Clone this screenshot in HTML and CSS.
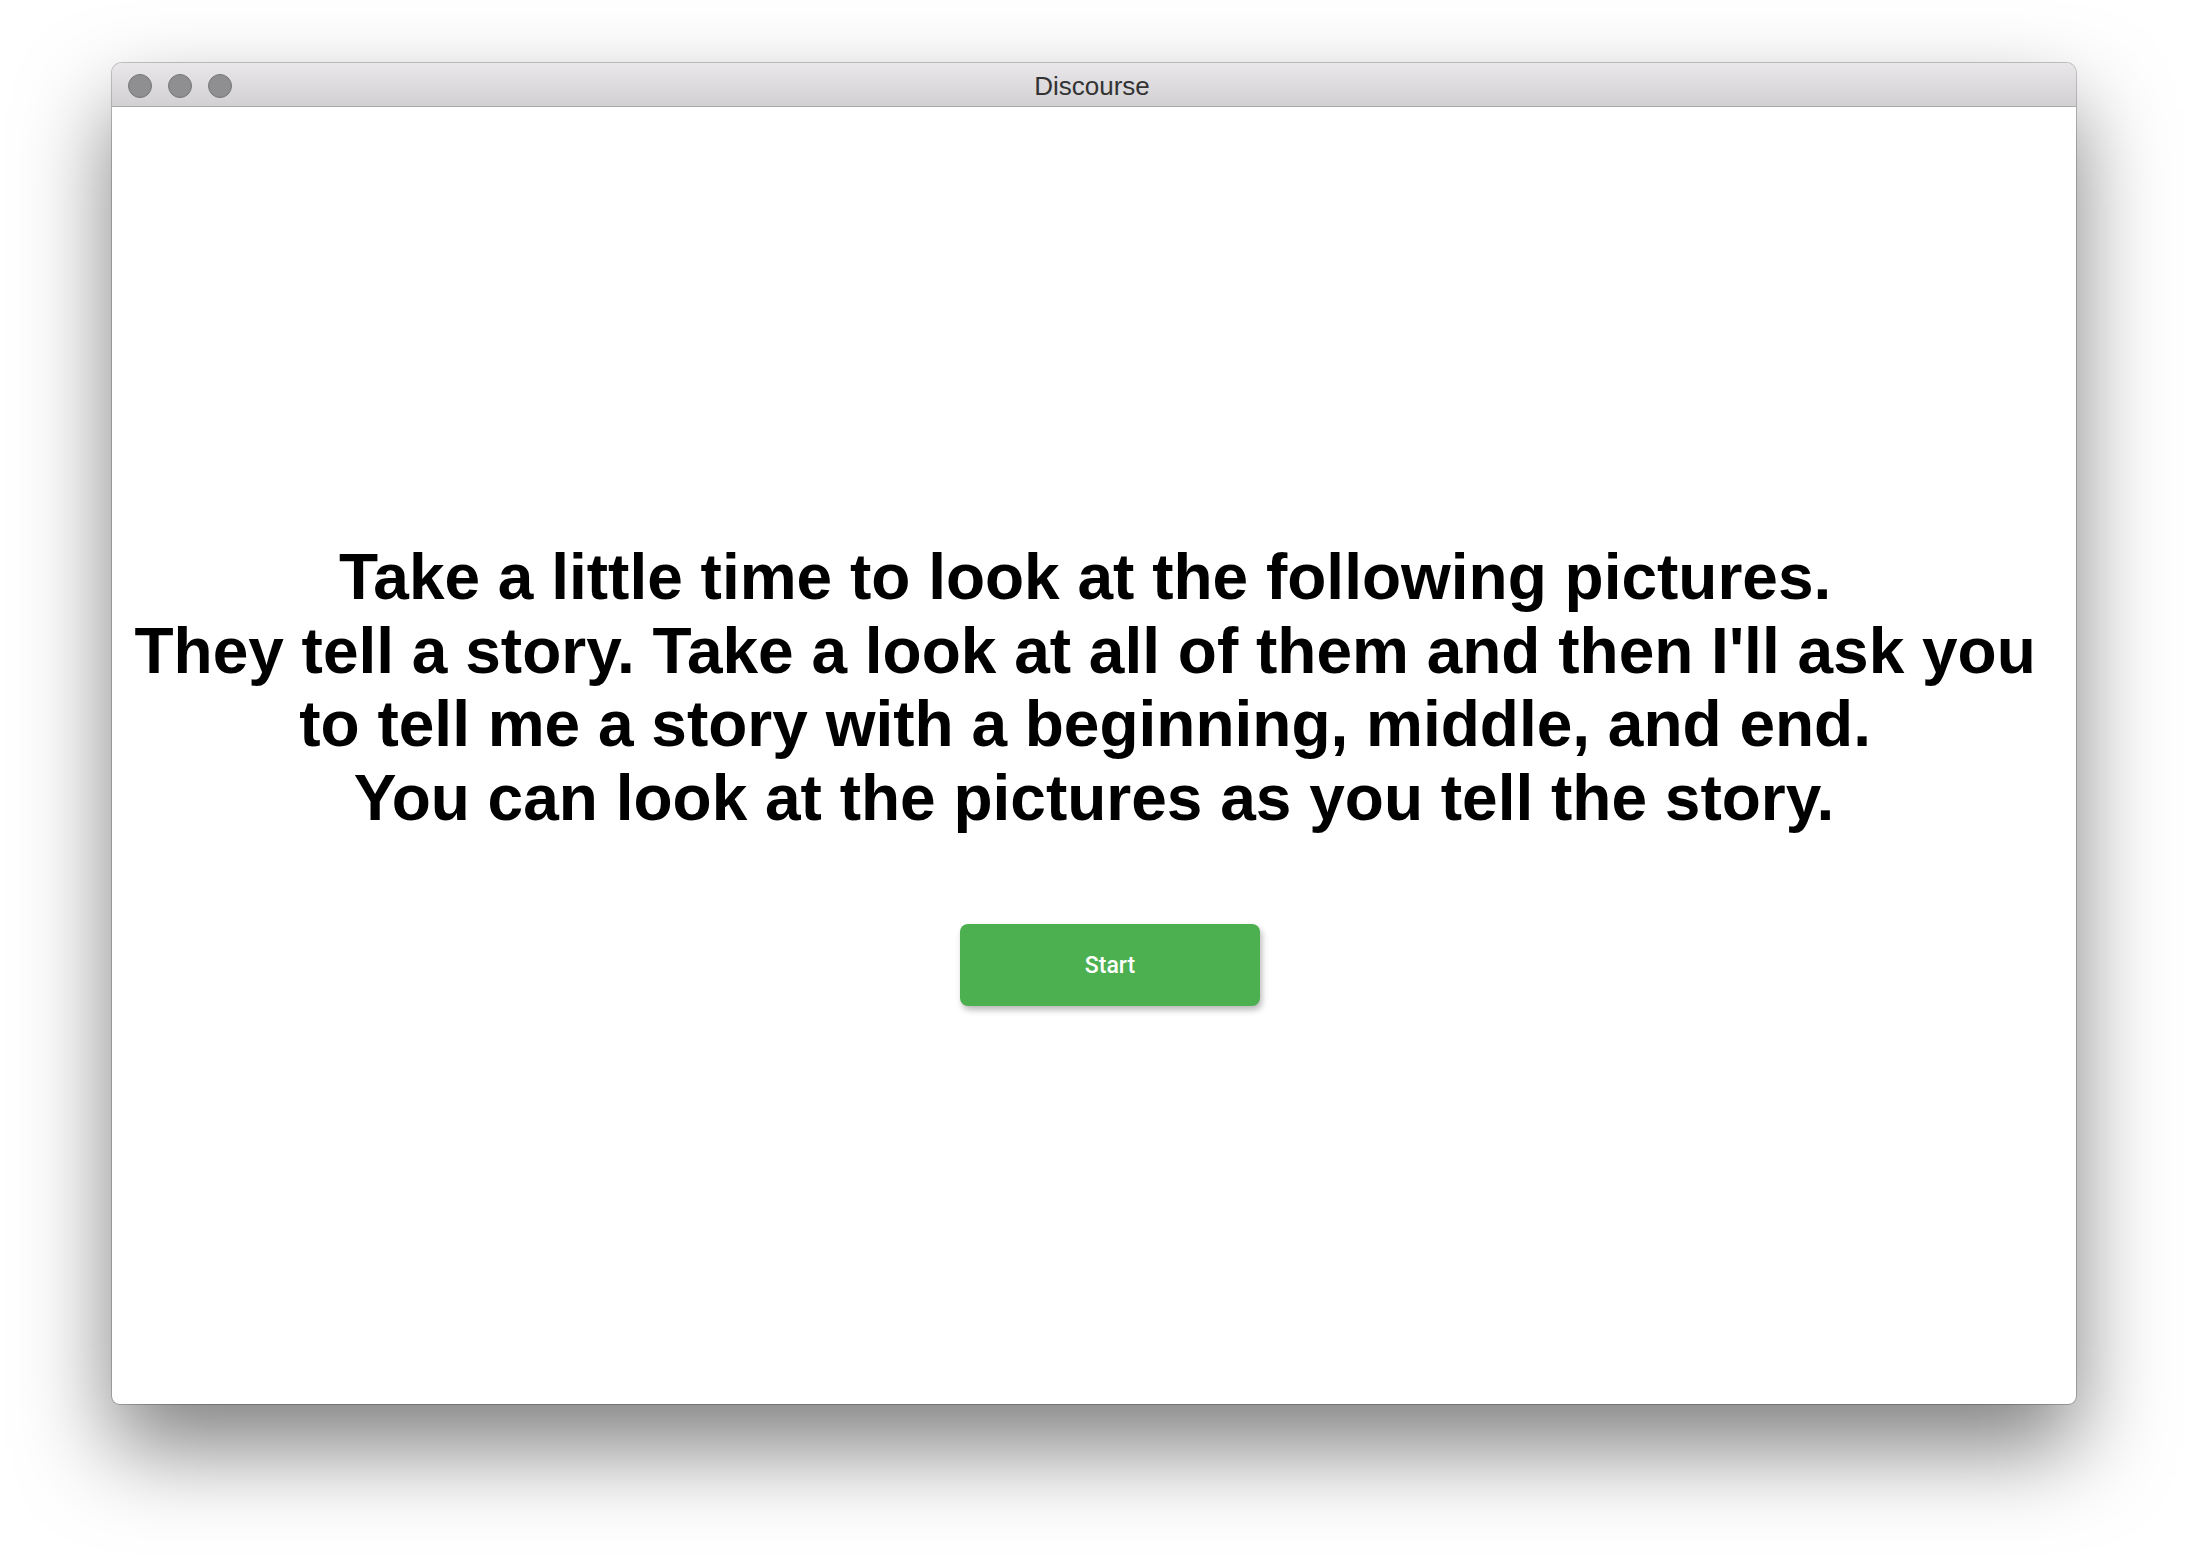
FILE: index.html
```html
<!DOCTYPE html>
<html>
<head>
<meta charset="utf-8">
<link rel="stylesheet" href="styles.css">
</head>
<body>
<div class="window">
  <div class="titlebar">
    <div class="lights">
      <span class="light"></span>
      <span class="light"></span>
      <span class="light"></span>
    </div>
    <div class="title">Discourse</div>
  </div>
  <div class="content">
    <p class="prompt">Take a little time to look at the following pictures.&nbsp;<br>They tell a story. Take a look at all of them and then I'll ask you&nbsp;<br>to tell me a story with a beginning, middle, and end.&nbsp;<br>You can look at the pictures as you tell the story.</p>
    <button class="start">Start</button>
  </div>
</div>
</body>
</html>
```

FILE: styles.css
```css
html, body {
  margin: 0;
  padding: 0;
  background: #ffffff;
}
body {
  width: 2188px;
  height: 1564px;
  padding: 63px 0 0 112px;
  box-sizing: border-box;
  overflow: hidden;
}
.window {
  width: 1964px;
  height: 1341px;
  border-radius: 10px 10px 8px 8px;
  background: #ffffff;
  box-shadow: 0 44px 90px rgba(0, 0, 0, 0.5), 0 0 0 1px rgba(0, 0, 0, 0.22);
  display: flex;
  flex-direction: column;
  overflow: hidden;
}
.titlebar {
  height: 43px;
  flex: none;
  background: linear-gradient(#e9e7e9, #d2d0d2);
  border-bottom: 1px solid #acaaac;
  position: relative;
  display: flex;
  align-items: center;
  justify-content: center;
}
.lights {
  position: absolute;
  left: 16px;
  top: 11px;
  display: flex;
  gap: 16px;
}
.light {
  width: 22px;
  height: 22px;
  border-radius: 50%;
  background: #8f8e91;
  border: 1px solid #767578;
}
.title {
  font-family: "Liberation Sans", Arial, sans-serif;
  font-size: 26px;
  color: #333333;
  margin-left: -4px;
  margin-top: 4px;
}
.content {
  flex: 1;
  display: flex;
  flex-direction: column;
  align-items: center;
  padding-top: 434px;
}
.prompt {
  margin: 0;
  font-family: "Liberation Sans", Arial, sans-serif;
  font-weight: bold;
  font-size: 64px;
  line-height: 73.5px;
  text-align: center;
  color: #000;
}
.start {
  margin-top: 89px;
  margin-left: 32px;
  width: 300px;
  height: 82px;
  padding-top: 2px;
  border: none;
  border-radius: 8px;
  background: #4caf50;
  color: #ffffff;
  font-family: Roboto, "Noto Sans", sans-serif;
  font-weight: 500;
  font-size: 23px;
  box-shadow: 2px 4px 6px rgba(0, 0, 0, 0.28);
}
```
